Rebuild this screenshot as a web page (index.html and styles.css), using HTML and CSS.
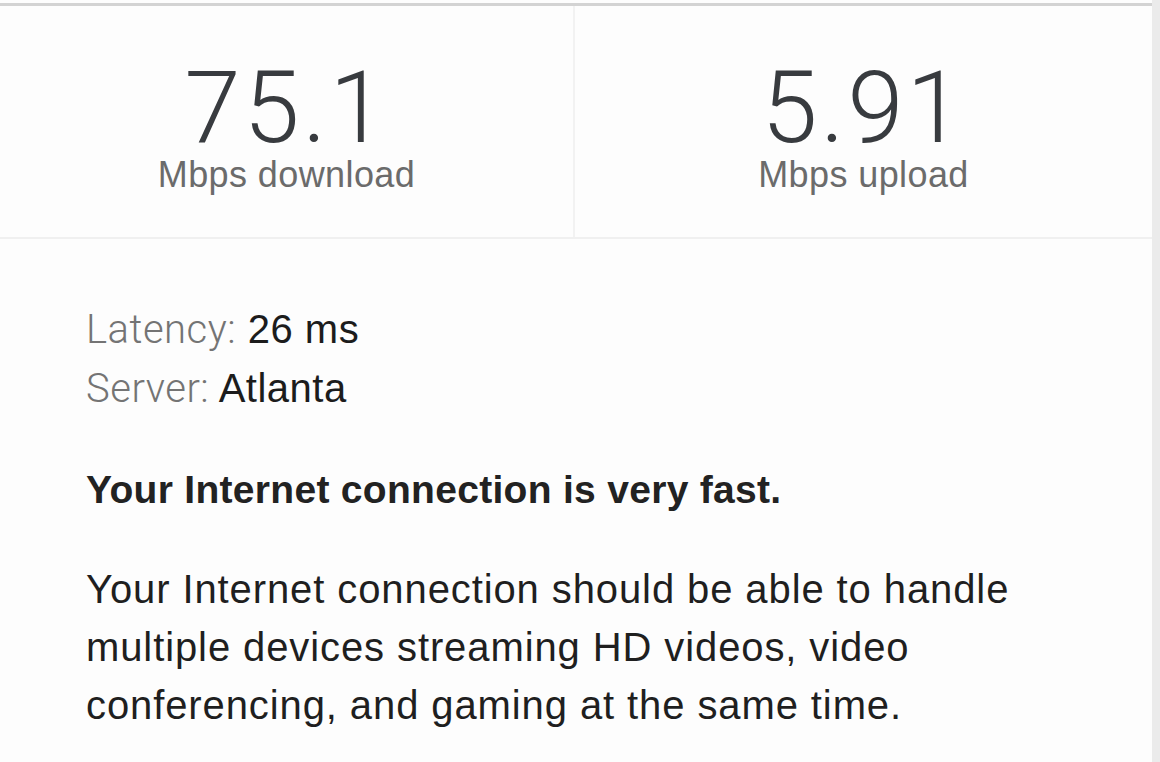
FILE: index.html
```html
<!DOCTYPE html>
<html lang="en">
<head>
    <meta charset="UTF-8">
    <meta name="viewport" content="width=device-width, initial-scale=1.0">
    <title>Speed test result</title>
    <link rel="stylesheet" href="styles.css">
</head>
<body>
    <div class="result">
        <div class="stats">
            <div class="stat">
                <div class="value">75.1</div>
                <div class="unit">Mbps download</div>
            </div>
            <div class="stat">
                <div class="value">5.91</div>
                <div class="unit">Mbps upload</div>
            </div>
        </div>
        <div class="details">
            <div class="meta">
                <div><span class="label">Latency:</span> 26 ms</div>
                <div><span class="label">Server:</span> Atlanta</div>
            </div>
            <p class="verdict">Your Internet connection is very fast.</p>
            <p class="summary">Your Internet connection should be able to handle multiple devices streaming HD videos, video conferencing, and gaming at the same time.</p>
        </div>
    </div>
</body>
</html>
```

FILE: styles.css
```css
body {
    margin: 0;
    background: #ebebeb;
    font-family: "Liberation Sans", Arial, sans-serif;
    color: #1f1f1f;
}
.result {
    width: 1152px;
    height: 762px;
    background: #fdfdfd;
    padding-top: 3px;
    box-sizing: border-box;
}
.stats {
    display: grid;
    grid-template-columns: 575px 1fr;
    border-top: 3px solid #d3d3d3;
    border-bottom: 2px solid #f0f0f0;
    height: 236px;
    box-sizing: border-box;
}
.stat {
    display: flex;
    flex-direction: column;
    align-items: center;
    padding-top: 54px;
}
.stat:first-child {
    border-right: 2px solid #f2f2f2;
}
.value {
    font-family: Roboto, "Liberation Sans", sans-serif;
    font-weight: 300;
    font-size: 101px;
    line-height: 96px;
    letter-spacing: 3px;
    color: #383b3f;
}
.unit {
    font-size: 36px;
    line-height: 37px;
    letter-spacing: 0.4px;
    color: #6b6b6b;
}
.details {
    padding: 61px 0 0 86px;
}
.meta {
    font-size: 40px;
    line-height: 59px;
    letter-spacing: 0.5px;
    color: #1c1c1c;
}
.label {
    font-family: Roboto, "Liberation Sans", sans-serif;
    font-weight: 300;
    color: #747474;
}
.verdict {
    margin: 42px 0 0;
    font-size: 39px;
    line-height: 59px;
    letter-spacing: 0.3px;
    font-weight: bold;
    color: #222;
}
.summary {
    margin: 41px 0 0;
    font-size: 40px;
    line-height: 58px;
    letter-spacing: 0.9px;
    color: #1f1f1f;
    width: 1000px;
}
```
